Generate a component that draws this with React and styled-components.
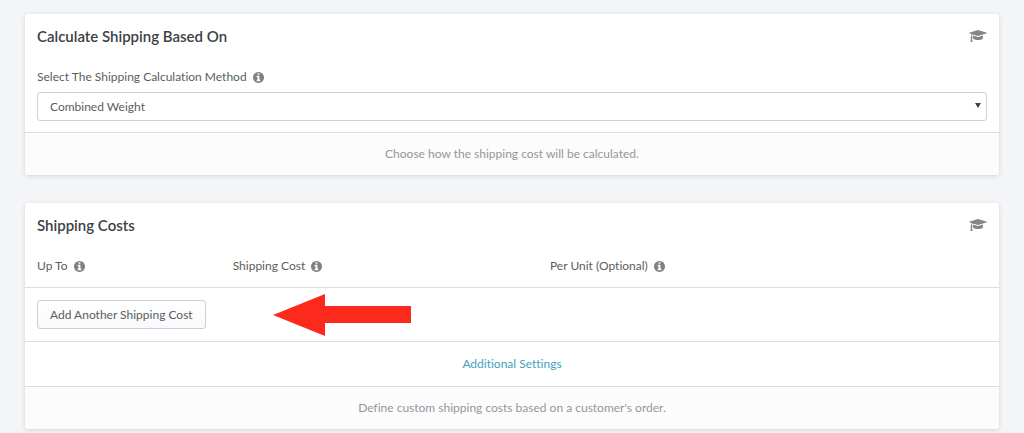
import styled, { createGlobalStyle } from "styled-components";

const GlobalStyle = createGlobalStyle`
  * {
    box-sizing: border-box;
  }
  body {
    margin: 0;
    background-color: #f3f5f7;
    color: #5a5d60;
    font-family: Lato, "Open Sans", sans-serif;
    font-size: 12px;
    font-variant-ligatures: none;
    line-height: 20px;
  }
`;

const Page = styled.main`
  display: flex;
  flex-direction: column;
  gap: 28px;
  padding: 14px 25px 4px;
`;

const Card = styled.section`
  background-color: #fff;
  border-radius: 3px;
  box-shadow: 0 1px 4px rgba(40, 50, 60, 0.16);
`;

const CardHeader = styled.header`
  display: flex;
  align-items: center;
  justify-content: space-between;
  padding: 12px 12px 0;
`;

const CardTitle = styled.h2`
  margin: 0;
  color: #3b4046;
  font-size: 15px;
  font-weight: 600;
  line-height: 20px;
`;

const HelpLink = styled.a`
  display: flex;
  color: #858585;

  svg {
    width: 18px;
    height: 14px;
  }
`;

const CardBody = styled.div`
  padding: 21px 12px 11px;
`;

const CardRow = styled.div`
  display: flex;
  align-items: center;
  justify-content: ${(props) => (props.$center ? "center" : "flex-start")};
  padding: 12px;
  border-top: 1px solid #dcdddf;
`;

const CardFooter = styled.footer`
  padding: 11px 12px;
  border-top: 1px solid #dcdddf;
  border-radius: 0 0 3px 3px;
  background-color: #fcfcfd;
  color: #93979b;
  text-align: center;
`;

const FieldLabel = styled.label`
  display: flex;
  align-items: center;
  gap: 6px;
  margin-bottom: 5px;
`;

const InfoSvg = styled.svg`
  width: 11px;
  height: 11px;
  color: #808080;
`;

const SelectBox = styled.div`
  position: relative;

  &::after {
    content: "";
    position: absolute;
    top: 11px;
    right: 6px;
    border: 3px solid transparent;
    border-top: 5px solid #3d4043;
    border-bottom: 0;
    pointer-events: none;
  }
`;

const Select = styled.select`
  display: block;
  width: 100%;
  height: 29px;
  padding: 0 12px;
  border: 1px solid #d0d3d6;
  border-radius: 3px;
  background-color: #fff;
  color: inherit;
  font: inherit;
  appearance: none;
`;

const CostTable = styled.table`
  width: 100%;
  border-collapse: collapse;
  table-layout: fixed;
`;

const CostHeading = styled.th`
  width: ${(props) => props.$width || "auto"};
  padding: 0;
  font-weight: 400;
  text-align: left;

  span {
    display: flex;
    align-items: center;
    gap: 6px;
  }
`;

const Button = styled.button`
  height: 29px;
  padding: 0 12px;
  border: 1px solid #cbced3;
  border-radius: 3px;
  background: linear-gradient(#fff, #f8f9fc);
  color: inherit;
  font: inherit;
`;

const Arrow = styled.svg`
  display: block;
  width: 138px;
  height: 42px;
  margin: -7px 0 -7px 67px;
`;

const SettingsLink = styled.a`
  color: #459fc0;
  text-decoration: none;
`;

const columns = [
  { name: "Up To", width: "20.6%" },
  { name: "Shipping Cost", width: "33.4%" },
  { name: "Per Unit (Optional)" },
];

const InfoIcon = () => (
  <InfoSvg viewBox="128 128 1536 1536" fill="currentColor" aria-hidden="true">
    <path d="M1152 1376v-160q0-14-9-23t-23-9h-96v-512q0-14-9-23t-23-9h-320q-14 0-23 9t-9 23v160q0 14 9 23t23 9h96v320h-96q-14 0-23 9t-9 23v160q0 14 9 23t23 9h448q14 0 23-9t9-23zM1024 480v-160q0-14-9-23t-23-9h-192q-14 0-23 9t-9 23v160q0 14 9 23t23 9h192q14 0 23-9t9-23zM1664 896q0 209-103 385.5t-279.5 279.5-385.5 103-385.5-103-279.5-279.5-103-385.5 103-385.5 279.5-279.5 385.5-103 385.5 103 279.5 279.5 103 385.5z" />
  </InfoSvg>
);

const Help = () => (
  <HelpLink href="#" aria-label="Help">
    <svg viewBox="0 0 2304 1792" fill="currentColor">
      <path d="M1774 836l18 316q4 69-82 128t-235 93.5-323 34.5-323-34.5-235-93.5-82-128l18-316 574 181q22 7 48 7t48-7zM2304 512q0 23-22 31l-1120 352q-4 1-10 1t-10-1l-652-206q-43 34-71 111.5t-34 178.5q63 36 63 109 0 69-58 107l58 433q2 14-8 25-9 11-24 11h-192q-15 0-24-11-10-11-8-25l58-433q-58-38-58-107 0-73 65-111 11-207 98-330l-333-104q-22-8-22-31t22-31l1120-352q4-1 10-1t10 1l1120 352q22 8 22 31z" />
    </svg>
  </HelpLink>
);

const App = () => {
  return (
    <>
      <GlobalStyle />
      <Page>
        <Card>
          <CardHeader>
            <CardTitle>Calculate Shipping Based On</CardTitle>
            <Help />
          </CardHeader>
          <CardBody>
            <FieldLabel htmlFor="method">
              Select The Shipping Calculation Method <InfoIcon />
            </FieldLabel>
            <SelectBox>
              <Select id="method">
                <option>Combined Weight</option>
              </Select>
            </SelectBox>
          </CardBody>
          <CardFooter>Choose how the shipping cost will be calculated.</CardFooter>
        </Card>

        <Card>
          <CardHeader>
            <CardTitle>Shipping Costs</CardTitle>
            <Help />
          </CardHeader>
          <CardBody>
            <CostTable>
              <thead>
                <tr>
                  {columns.map((column) => (
                    <CostHeading key={column.name} $width={column.width}>
                      <span>
                        {column.name} <InfoIcon />
                      </span>
                    </CostHeading>
                  ))}
                </tr>
              </thead>
            </CostTable>
          </CardBody>
          <CardRow>
            <Button type="button">Add Another Shipping Cost</Button>
            <Arrow viewBox="0 0 138 42" aria-hidden="true">
              <path d="M0 21 52 0V12H138V29H52V42Z" fill="#fb2a1d" />
            </Arrow>
          </CardRow>
          <CardRow $center>
            <SettingsLink href="#">Additional Settings</SettingsLink>
          </CardRow>
          <CardFooter>Define custom shipping costs based on a customer's order.</CardFooter>
        </Card>
      </Page>
    </>
  );
};

export default App;
